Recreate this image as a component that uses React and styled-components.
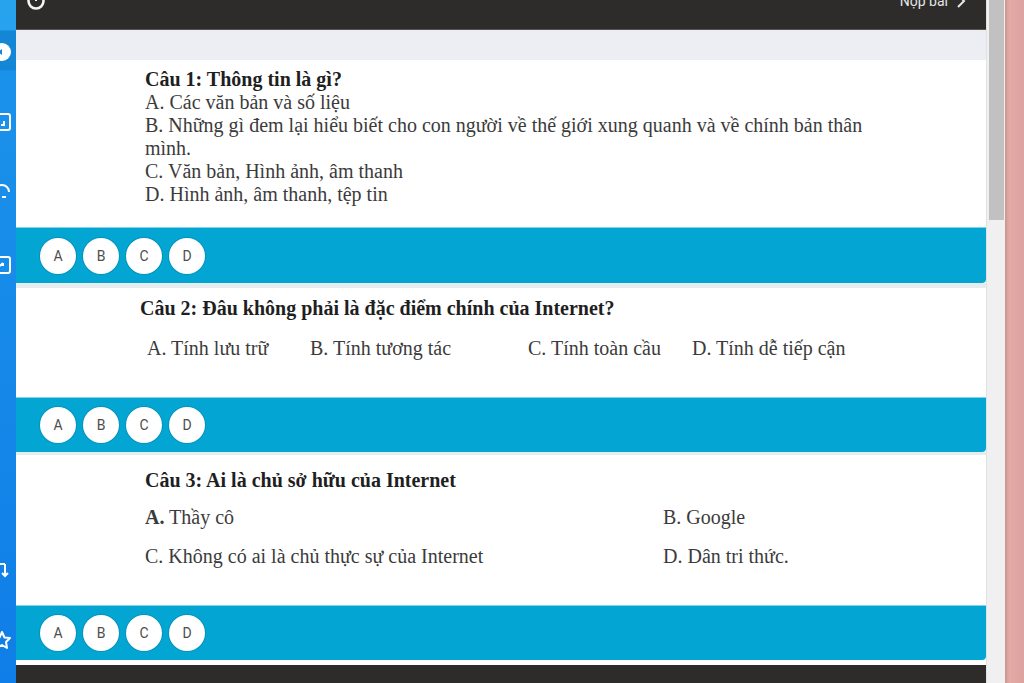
import React from "react";
import styled, { createGlobalStyle } from "styled-components";

const Global = createGlobalStyle`
  html, body { margin: 0; padding: 0; }
  body { width: 1024px; height: 683px; overflow: hidden; background: #ffffff; }
  #root { height: 683px; }
`;

const Frame = styled.div`
  display: flex;
  width: 1024px;
  height: 683px;
  overflow: hidden;
`;

const Sidebar = styled.div`
  width: 16px;
  flex: none;
  display: flex;
  flex-direction: column;
  align-items: flex-start;
  overflow: hidden;
  background: linear-gradient(180deg, #27a2ec 0px, #27a2ec 30px, #1386d6 31px, #1386d6 70px, #1b92ea 71px, #0f7ee8 100%);
`;

const SideIcon = styled.div`
  margin-top: ${(p) => p.$top}px;
  margin-left: ${(p) => p.$left || -8}px;
  width: 20px;
  height: 20px;
  flex: none;
  display: flex;
`;

const Main = styled.div`
  flex: 1;
  display: flex;
  flex-direction: column;
  min-width: 0;
  background: #ffffff;
`;

const TopBar = styled.div`
  height: 30px;
  flex: none;
  background: #2e2c2a;
  display: flex;
  align-items: flex-start;
  justify-content: space-between;
  padding: 0 20px 0 10px;
  overflow: hidden;
  border-bottom: 1px solid #56544f;
  box-sizing: border-box;
`;

const Clock = styled.div`
  margin-top: -9px;
  width: 20px;
  height: 20px;
  display: flex;
`;

const Submit = styled.div`
  margin-top: -8px;
  display: flex;
  align-items: center;
  gap: 8px;
  color: #e6e6e6;
  font-family: Roboto, "Noto Sans", sans-serif;
  font-size: 14px;
  line-height: 18px;
`;

const Strip = styled.div`
  height: ${(p) => p.$h}px;
  flex: none;
  background: ${(p) => p.$bg || "#eceef3"};
`;

const Card = styled.div`
  flex: none;
  height: ${(p) => p.$h}px;
  box-sizing: border-box;
  background: #ffffff;
  padding: ${(p) => p.$pt}px 0 0 ${(p) => p.$pl}px;
  font-family: "Liberation Serif", "Times New Roman", serif;
  font-size: ${(p) => p.$fs}px;
  line-height: 23px;
  color: #3b3b3b;
`;

const Title = styled.div`
  font-weight: bold;
  color: #1f1f1f;
  margin-left: ${(p) => p.$ml || 0}px;
  margin-bottom: ${(p) => p.$mb || 0}px;
`;

const Line = styled.div`
  max-width: 740px;
`;

const OptionGrid = styled.div`
  display: grid;
  grid-template-columns: ${(p) => p.$cols};
  row-gap: ${(p) => p.$rg || 0}px;
  margin-left: ${(p) => p.$ml || 0}px;
  white-space: nowrap;
`;

const AnswerBar = styled.div`
  flex: none;
  height: ${(p) => p.$h}px;
  box-sizing: border-box;
  background: #03a6d3;
  border-top: 1px solid #7fd6ee;
  border-radius: 0 0 4px 0;
  display: flex;
  align-items: center;
  gap: 7px;
  padding-left: 24px;
`;

const Choice = styled.div`
  width: 36px;
  height: 36px;
  border-radius: 50%;
  background: #ffffff;
  box-shadow: 0 0 0 1px rgba(0, 90, 120, 0.25);
  display: flex;
  align-items: center;
  justify-content: center;
  font-family: Roboto, "Noto Sans", sans-serif;
  font-size: 14px;
  color: #4e4e4e;
`;

const BottomBar = styled.div`
  flex: 1;
  background: #2e2c2a;
`;

const Scrollbar = styled.div`
  width: 18px;
  flex: none;
  background: #f0f0f0;
  border-left: 1px solid #e2e2e2;
  display: flex;
  flex-direction: column;
  align-items: center;
`;

const Thumb = styled.div`
  width: 15px;
  height: 220px;
  background: #c1c1c1;
`;

const Pink = styled.div`
  width: 19px;
  flex: none;
  background: linear-gradient(90deg, #c99490 0px, #e3aaa6 4px, #dca29f 100%);
`;

const Choices = ({ h }) => (
  <AnswerBar $h={h}>
    {["A", "B", "C", "D"].map((l) => (
      <Choice key={l}>{l}</Choice>
    ))}
  </AnswerBar>
);

const W = "#ffffff";

export default function App() {
  return (
    <Frame>
      <Global />
      <Sidebar>
        <SideIcon $top={42}>
          <svg width="20" height="20" viewBox="0 0 20 20">
            <circle cx="10" cy="10" r="9" fill={W} />
            <path d="M6 10 L10 7 L10 13 Z" fill="#1386d6" />
          </svg>
        </SideIcon>
        <SideIcon $top={50}>
          <svg width="20" height="20" viewBox="0 0 20 20">
            <rect x="2" y="2" width="16" height="16" rx="2" fill="none" stroke={W} strokeWidth="2" />
            <path d="M12 9 V13 H9" fill="none" stroke={W} strokeWidth="2" />
          </svg>
        </SideIcon>
        <SideIcon $top={48}>
          <svg width="20" height="20" viewBox="0 0 20 20">
            <path d="M3 12 A7 7 0 1 1 17 12" fill="none" stroke={W} strokeWidth="2" />
            <path d="M3 12 V15 H6 V11 H3 M14 17 H10" fill="none" stroke={W} strokeWidth="2" />
          </svg>
        </SideIcon>
        <SideIcon $top={55}>
          <svg width="20" height="20" viewBox="0 0 20 20">
            <rect x="2" y="2" width="16" height="16" rx="2" fill="none" stroke={W} strokeWidth="2" />
            <path d="M8 11 L11 8 M11 8 V11" fill="none" stroke={W} strokeWidth="2" />
          </svg>
        </SideIcon>
        <SideIcon $top={285}>
          <svg width="20" height="20" viewBox="0 0 20 20">
            <path d="M2 4 H13 M13 4 V10 M10 13 L13 16 L16 13 M13 10 V16" fill="none" stroke={W} strokeWidth="2" />
          </svg>
        </SideIcon>
        <SideIcon $top={50}>
          <svg width="20" height="20" viewBox="0 0 20 20">
            <path d="M10 2 L12.5 7.5 L18 8 L14 12 L15 18 L10 15 L5 18 L6 12 L2 8 L7.5 7.5 Z" fill="none" stroke={W} strokeWidth="2" strokeLinejoin="round" />
          </svg>
        </SideIcon>
      </Sidebar>

      <Main>
        <TopBar>
          <Clock>
            <svg width="20" height="20" viewBox="0 0 20 20">
              <circle cx="10" cy="10" r="7.5" fill="none" stroke="#f4f4f4" strokeWidth="2.6" />
              <path d="M10 6 V10" stroke="#f4f4f4" strokeWidth="2" />
            </svg>
          </Clock>
          <Submit>
            <span>Nộp bài</span>
            <svg width="10" height="14" viewBox="0 0 10 14">
              <path d="M2 1 L8 7 L2 13" fill="none" stroke="#e6e6e6" strokeWidth="2" />
            </svg>
          </Submit>
        </TopBar>
        <Strip $h={30} />

        <Card $h={167} $pt={8} $pl={129} $fs={20}>
          <Title>Câu 1: Thông tin là gì?</Title>
          <Line>A. Các văn bản và số liệu</Line>
          <Line>B. Những gì đem lại hiểu biết cho con người về thế giới xung quanh và về chính bản thân mình.</Line>
          <Line>C. Văn bản, Hình ảnh, âm thanh</Line>
          <Line>D. Hình ảnh, âm thanh, tệp tin</Line>
        </Card>
        <Choices h={56} />
        <Strip $h={5} $bg="#e7ecef" />

        <Card $h={109} $pt={9} $pl={131} $fs={20}>
          <Title $ml={-7} $mb={17}>Câu 2: Đâu không phải là đặc điểm chính của Internet?</Title>
          <OptionGrid $cols="163px 218px 164px auto">
            <span>A. Tính lưu trữ</span>
            <span>B. Tính tương tác</span>
            <span>C. Tính toàn cầu</span>
            <span>D. Tính dễ tiếp cận</span>
          </OptionGrid>
        </Card>
        <Choices h={55} />
        <Strip $h={3} $bg="#e7ecef" />

        <Card $h={150} $pt={14} $pl={129} $fs={20}>
          <Title $mb={14}>Câu 3: Ai là chủ sở hữu của Internet</Title>
          <OptionGrid $cols="518px auto" $rg={16}>
            <span><b>A.</b> Thầy cô</span>
            <span>B. Google</span>
            <span>C. Không có ai là chủ thực sự của Internet</span>
            <span>D. Dân tri thức.</span>
          </OptionGrid>
        </Card>
        <Choices h={55} />
        <Strip $h={5} $bg="#ffffff" />
        <BottomBar />
      </Main>

      <Scrollbar>
        <Thumb />
      </Scrollbar>
      <Pink />
    </Frame>
  );
}
